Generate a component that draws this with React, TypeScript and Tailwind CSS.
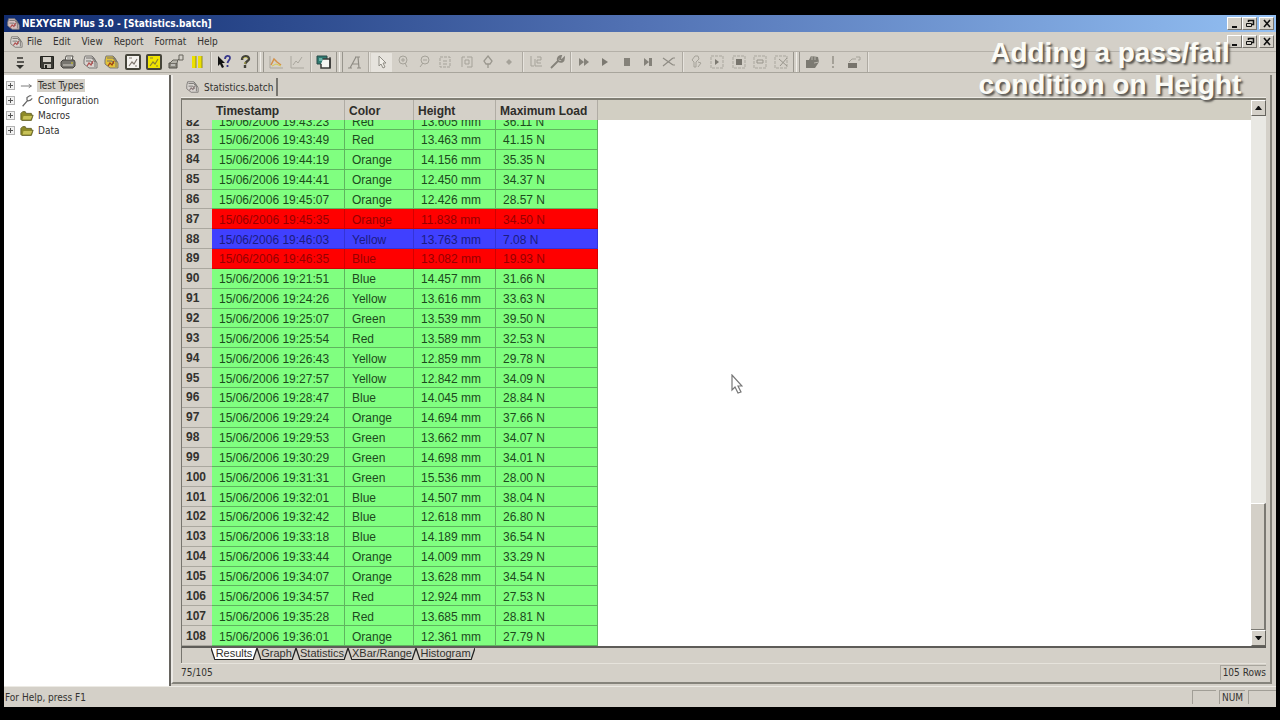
import type { ReactNode } from "react";
import clsx from "clsx";

type RowStatus = "pass" | "fail" | "selected";

interface ResultRow {
  id: number;
  timestamp: string;
  color: string;
  height: string;
  load: string;
  status?: RowStatus;
}

const ROWS: ResultRow[] = [
  { id: 83, timestamp: "15/06/2006 19:43:49", color: "Red", height: "13.463 mm", load: "41.15 N" },
  { id: 84, timestamp: "15/06/2006 19:44:19", color: "Orange", height: "14.156 mm", load: "35.35 N" },
  { id: 85, timestamp: "15/06/2006 19:44:41", color: "Orange", height: "12.450 mm", load: "34.37 N" },
  { id: 86, timestamp: "15/06/2006 19:45:07", color: "Orange", height: "12.426 mm", load: "28.57 N" },
  { id: 87, timestamp: "15/06/2006 19:45:35", color: "Orange", height: "11.838 mm", load: "34.50 N", status: "fail" },
  { id: 88, timestamp: "15/06/2006 19:46:03", color: "Yellow", height: "13.763 mm", load: "7.08 N", status: "selected" },
  { id: 89, timestamp: "15/06/2006 19:46:35", color: "Blue", height: "13.082 mm", load: "19.93 N", status: "fail" },
  { id: 90, timestamp: "15/06/2006 19:21:51", color: "Blue", height: "14.457 mm", load: "31.66 N" },
  { id: 91, timestamp: "15/06/2006 19:24:26", color: "Yellow", height: "13.616 mm", load: "33.63 N" },
  { id: 92, timestamp: "15/06/2006 19:25:07", color: "Green", height: "13.539 mm", load: "39.50 N" },
  { id: 93, timestamp: "15/06/2006 19:25:54", color: "Red", height: "13.589 mm", load: "32.53 N" },
  { id: 94, timestamp: "15/06/2006 19:26:43", color: "Yellow", height: "12.859 mm", load: "29.78 N" },
  { id: 95, timestamp: "15/06/2006 19:27:57", color: "Yellow", height: "12.842 mm", load: "34.09 N" },
  { id: 96, timestamp: "15/06/2006 19:28:47", color: "Blue", height: "14.045 mm", load: "28.84 N" },
  { id: 97, timestamp: "15/06/2006 19:29:24", color: "Orange", height: "14.694 mm", load: "37.66 N" },
  { id: 98, timestamp: "15/06/2006 19:29:53", color: "Green", height: "13.662 mm", load: "34.07 N" },
  { id: 99, timestamp: "15/06/2006 19:30:29", color: "Green", height: "14.698 mm", load: "34.01 N" },
  { id: 100, timestamp: "15/06/2006 19:31:31", color: "Green", height: "15.536 mm", load: "28.00 N" },
  { id: 101, timestamp: "15/06/2006 19:32:01", color: "Blue", height: "14.507 mm", load: "38.04 N" },
  { id: 102, timestamp: "15/06/2006 19:32:42", color: "Blue", height: "12.618 mm", load: "26.80 N" },
  { id: 103, timestamp: "15/06/2006 19:33:18", color: "Blue", height: "14.189 mm", load: "36.54 N" },
  { id: 104, timestamp: "15/06/2006 19:33:44", color: "Orange", height: "14.009 mm", load: "33.29 N" },
  { id: 105, timestamp: "15/06/2006 19:34:07", color: "Orange", height: "13.628 mm", load: "34.54 N" },
  { id: 106, timestamp: "15/06/2006 19:34:57", color: "Red", height: "12.924 mm", load: "27.53 N" },
  { id: 107, timestamp: "15/06/2006 19:35:28", color: "Red", height: "13.685 mm", load: "28.81 N" },
  { id: 108, timestamp: "15/06/2006 19:36:01", color: "Orange", height: "12.361 mm", load: "27.79 N" },
];

const STATUS_CLASSES: Record<RowStatus, string> = {
  pass: "bg-[#80ff80] text-[#1d4a1d] border-[#5fb45f]",
  fail: "bg-[#ff0000] text-[#960000] border-[#d40000]",
  selected: "bg-[#4040ff] text-[#1c1c80] border-[#3434d8]",
};

const GRAY = "#8f8c84";

function Icon({ children, size = 16 }: { children: ReactNode; size?: number }) {
  return (
    <svg width={size} height={size} viewBox="0 0 16 16" fill="none" aria-hidden="true">
      {children}
    </svg>
  );
}

// Stacked sheets with a red mark, used for the app and for batch documents
function BatchIcon({ size = 16, fill = "#d8d4d0", mark = "#b05050" }: { size?: number; fill?: string; mark?: string }) {
  return (
    <Icon size={size}>
      <path d="M2 6l1-4h7l2 2 3 5v5H7l-5-4z" fill={fill} stroke="#7a7876" />
      <path d="M4 4h6l3 4v5M4 7h5l2 3M10 2l4 6" stroke="#75726f" />
      <path d="M5 12l2-3 2 2 2-4" stroke={mark} strokeWidth="1.3" />
    </Icon>
  );
}

const saveIcon = (
  <Icon>
    <path d="M1.500 2.500h13v12h-12l-1-1z" fill="#3a3a34" stroke="#22221e" />
    <path d="M4 3h8v5H4z" fill="#d4d0c8" />
    <path d="M5 10h7v4H5z" fill="#b9b6ae" />
    <path d="M6 11h2v3H6z" fill="#22221e" />
  </Icon>
);

const printIcon = (
  <Icon>
    <path d="M5 7l1-5h7l-1 5" fill="#f4f2ec" stroke="#55534e" />
    <path d="M1 8l2-2h11l1 2v4l-2 2H3l-2-2z" fill="#77756f" stroke="#45433f" />
    <path d="M3 11h10" stroke="#d4d0c8" />
    <path d="M11 9h2" stroke="#d8d020" />
    <path d="M7 4h4" stroke="#77756f" />
  </Icon>
);

const goldBatchIcon = <BatchIcon fill="#e3c338" mark="#a04010" />;

function ChartBox({ fill, line }: { fill: string; line: string }) {
  return (
    <Icon>
      <rect x="1" y="1" width="14" height="14" rx="1" fill={fill} stroke="#45443a" strokeWidth="2" />
      <path d="M4 12l3-4 2 2 3-5M4 4h3M10 12h2" stroke={line} strokeWidth="1.200" />
    </Icon>
  );
}

const connectIcon = (
  <Icon>
    <path d="M1 9h8v5H1z" fill="#8c8a80" stroke="#55534c" />
    <path d="M2 9l3-3h5l-1 3" fill="#b5b3aa" stroke="#66645c" />
    <path d="M11 1h4v5h-4zM9 7l2-2" stroke="#66645c" />
    <path d="M3 11h4" stroke="#eee" />
  </Icon>
);

const pauseIcon = (
  <Icon>
    <path d="M3 2h4v12H3zM9 2h4v12H9z" fill="#ece000" />
    <path d="M7 2v12M13 2v12" stroke="#8f8a20" />
  </Icon>
);

const contextHelpIcon = (
  <Icon>
    <path d="M2 2v10l2-2 2 4 2-1-2-4h3z" fill="#111" />
    <path d="M9 5c0-4 5-4 5-1 0 2-2 2-2.500 5M11.500 11v2" stroke="#38388c" strokeWidth="1.800" />
  </Icon>
);

const aboutIcon = (
  <Icon>
    <path d="M5 6c0-5 7-5 7-1 0 2-3 2-4 5M8 11v3" stroke="#44433a" strokeWidth="2.400" />
    <path d="M6 5c1-2 4-2 5 0M8 8v2" stroke="#c8c24a" strokeWidth="1" />
  </Icon>
);

const graphIcon = (
  <Icon>
    <path d="M2 2v12h13" stroke="#aaa69c" />
    <path d="M3 11l3-6 3 3 4 3" stroke="#d49048" strokeWidth="1.500" />
    <path d="M4 12l4-2 5 2" stroke="#d8ca50" />
  </Icon>
);

const grayGraphIcon = (
  <Icon>
    <path d="M2 2v12h13M4 11l3-4 2 2 4-6" stroke="#aaa79e" />
  </Icon>
);

const windowIcon = (
  <Icon>
    <path d="M1 2h10v8H1z" fill="#2f7a70" stroke="#2a4a48" />
    <path d="M7 5h7v9H5v-4" fill="#f6f6f2" stroke="#3c3c38" strokeWidth="1.500" />
    <path d="M3 4h3v3H3z" fill="#6ab0a8" />
    <path d="M14 3v11" stroke="#222" />
  </Icon>
);

const italicIcon = (
  <Icon>
    <path d="M3 14L9 3h2l1 11M5 10h7M8 3h5M1 14h4M10 14h4" stroke={GRAY} strokeWidth="1.200" />
  </Icon>
);

const pointerIcon = (
  <Icon>
    <path d="M5 2v10l2-2 2 4 2-1-2-4h3z" fill="#f2f0ea" stroke={GRAY} />
  </Icon>
);

const zoomInIcon = (
  <Icon>
    <circle cx="8" cy="6" r="4" stroke="#a5a299" />
    <path d="M8 4v4M6 6h4M10 9l2 4" stroke="#a5a299" />
  </Icon>
);

const zoomOutIcon = (
  <Icon>
    <circle cx="9" cy="6" r="4" stroke="#a5a299" />
    <path d="M7 6h4M7 9l-3 4" stroke="#a5a299" />
  </Icon>
);

const zoomBoxIcon = (
  <Icon>
    <rect x="3" y="3" width="10" height="10" stroke="#a5a299" strokeDasharray="3 1" />
    <path d="M6 7h4M6 10h4" stroke="#a5a299" />
  </Icon>
);

const fitIcon = (
  <Icon>
    <path d="M3 13V3h3M8 3h5v10H8M6 6h4v4H6z" stroke="#a5a299" />
  </Icon>
);

const markerIcon = (
  <Icon>
    <path d="M8 2l4 5-2 3H6L4 7zM8 10v4" stroke="#9a978e" strokeWidth="1.300" />
  </Icon>
);

const dotIcon = (
  <Icon>
    <path d="M8 5l3 3-3 3-3-3z" fill="#a5a299" />
  </Icon>
);

const scaleIcon = (
  <Icon>
    <path d="M3 2v10h3M7 5v7h7M9 3h4v3H9v3h4" stroke="#a5a299" />
  </Icon>
);

const wrenchIcon = (
  <Icon>
    <path d="M2 14l7-7M9 7c-1-3 1-5 3-5l-1 3 2 1 2-2c0 3-2 5-6 3" stroke="#85827a" strokeWidth="1.800" />
  </Icon>
);

const fastForwardIcon = (
  <Icon>
    <path d="M3 4l5 4-5 4zM8 4l5 4-5 4z" fill="#85827a" />
  </Icon>
);

const playIcon = (
  <Icon>
    <path d="M5 4l6 4-6 4z" fill="#7c7971" />
  </Icon>
);

const stopIcon = (
  <Icon>
    <path d="M5 4h6v8H5z" fill="#85827a" />
  </Icon>
);

const skipIcon = (
  <Icon>
    <path d="M4 4l5 4-5 4zM9 4h3v8H9z" fill="#85827a" />
  </Icon>
);

const cutIcon = (
  <Icon>
    <path d="M2 4l10 7M2 12l10-8M12 4h2M12 11h2" stroke={GRAY} strokeWidth="1.200" />
  </Icon>
);

const handIcon = (
  <Icon>
    <path d="M6 13V8L4 6l3-4h3l1 3-3 3v5zM10 8l3 1-3 4" stroke="#a5a299" />
  </Icon>
);

function BoxedIcon({ children }: { children: ReactNode }) {
  return (
    <Icon>
      <rect x="2" y="2" width="12" height="12" stroke="#aaa79e" strokeDasharray="3 1" />
      {children}
    </Icon>
  );
}

const machineIcon = (
  <Icon>
    <path d="M2 6h3l2-4 7 1 1 5-4 6H2z" fill="#7c7a72" />
    <path d="M8 2v4M11 3v3M15 8l-5 1" stroke="#b8b5ac" />
  </Icon>
);

const alertIcon = (
  <Icon>
    <path d="M8 2v8M8 12v2" stroke="#98958c" strokeWidth="1.600" />
  </Icon>
);

const deviceIcon = (
  <Icon>
    <path d="M2 9h9v5H2z" fill="#77746c" />
    <path d="M3 8l3-3h4M10 3h4v3h-2" stroke="#a5a299" />
  </Icon>
);

function ToolButton({ label, pressed, children }: { label: string; pressed?: boolean; children: ReactNode }) {
  return (
    <button
      type="button"
      aria-label={label}
      className={clsx("flex h-[19px] min-w-0 flex-1 items-center justify-center", pressed && "bg-[#e6e3dd]")}
    >
      {children}
    </button>
  );
}

function Separator() {
  return (
    <div className="flex h-full w-[5px] justify-center">
      <div className="w-px bg-[#aeaaa2]" />
      <div className="w-px bg-[#e6e3dd]" />
    </div>
  );
}

// Gap between two docked bars
function BarBreak() {
  return (
    <div className="flex h-full w-[9px] justify-between px-px">
      <div className="w-px bg-[#98958d]" />
      <div className="w-px bg-[#f0eee9]" />
      <div className="w-px bg-[#98958d]" />
    </div>
  );
}

function Toolbar() {
  return (
    <div className="flex h-[22px] items-center border-y border-t-[#b4b0a8] border-b-[#a8a59c]">
      <div className="flex w-[32px] items-center">
        <ToolButton label="More buttons">
          <Icon>
            <path d="M5 4h6M5 8h7" stroke="#33322e" strokeWidth="1.500" />
            <path d="M4 11h8l-4 4z" fill="#33322e" />
          </Icon>
        </ToolButton>
      </div>
      <div className="flex w-[172px]">
        <ToolButton label="Save">{saveIcon}</ToolButton>
        <ToolButton label="Print">{printIcon}</ToolButton>
        <ToolButton label="New batch"><BatchIcon /></ToolButton>
        <ToolButton label="Open batch">{goldBatchIcon}</ToolButton>
        <ToolButton label="Test chart"><ChartBox fill="#f4f2ee" line="#807870" /></ToolButton>
        <ToolButton label="Run chart"><ChartBox fill="#f0e400" line="#8a8230" /></ToolButton>
        <ToolButton label="Connect">{connectIcon}</ToolButton>
        <ToolButton label="Pause">{pauseIcon}</ToolButton>
      </div>
      <Separator />
      <div className="flex w-[43px]">
        <ToolButton label="Context help">{contextHelpIcon}</ToolButton>
        <ToolButton label="About">{aboutIcon}</ToolButton>
      </div>
      <BarBreak />
      <div className="flex w-[43px]">
        <ToolButton label="Graph">{graphIcon}</ToolButton>
        <ToolButton label="Graph options">{grayGraphIcon}</ToolButton>
      </div>
      <Separator />
      <div className="flex w-[22px]">
        <ToolButton label="Windows">{windowIcon}</ToolButton>
      </div>
      <BarBreak />
      <div className="flex w-[22px]">
        <ToolButton label="Annotate">{italicIcon}</ToolButton>
      </div>
      <Separator />
      <div className="flex w-[149px]">
        <ToolButton label="Select" pressed>{pointerIcon}</ToolButton>
        <ToolButton label="Zoom in">{zoomInIcon}</ToolButton>
        <ToolButton label="Zoom out">{zoomOutIcon}</ToolButton>
        <ToolButton label="Zoom area">{zoomBoxIcon}</ToolButton>
        <ToolButton label="Fit">{fitIcon}</ToolButton>
        <ToolButton label="Marker">{markerIcon}</ToolButton>
        <ToolButton label="Point">{dotIcon}</ToolButton>
      </div>
      <Separator />
      <div className="flex w-[43px]">
        <ToolButton label="Scale">{scaleIcon}</ToolButton>
        <ToolButton label="Settings">{wrenchIcon}</ToolButton>
      </div>
      <Separator />
      <div className="flex w-[107px]">
        <ToolButton label="Fast forward">{fastForwardIcon}</ToolButton>
        <ToolButton label="Play">{playIcon}</ToolButton>
        <ToolButton label="Stop">{stopIcon}</ToolButton>
        <ToolButton label="Skip">{skipIcon}</ToolButton>
        <ToolButton label="Cut">{cutIcon}</ToolButton>
      </div>
      <Separator />
      <div className="flex w-[107px]">
        <ToolButton label="Pan">{handIcon}</ToolButton>
        <ToolButton label="Boxed play"><BoxedIcon><path d="M6 5l4 3-4 3z" fill="#7c7971" /></BoxedIcon></ToolButton>
        <ToolButton label="Boxed stop"><BoxedIcon><path d="M5 5h6v6H5z" fill="#77746c" /></BoxedIcon></ToolButton>
        <ToolButton label="Boxed list"><BoxedIcon><path d="M5 6h6v3H5z" stroke="#98958c" /></BoxedIcon></ToolButton>
        <ToolButton label="Boxed cut"><BoxedIcon><path d="M6 5l8 7M7 12l7-8" stroke="#98958c" /></BoxedIcon></ToolButton>
      </div>
      <BarBreak />
      <div className="flex w-[64px]">
        <ToolButton label="Machine">{machineIcon}</ToolButton>
        <ToolButton label="Alert">{alertIcon}</ToolButton>
        <ToolButton label="Device">{deviceIcon}</ToolButton>
      </div>
      <Separator />
    </div>
  );
}

function CaptionButtons() {
  const button =
    "flex h-[13px] w-[15px] items-center justify-center border border-t-white border-l-white border-r-[#77746e] border-b-[#77746e] bg-[#d4d0c8]";

  return (
    <div className="flex pr-[2px]">
      <button type="button" aria-label="Minimize" className={button}>
        <svg width="10" height="9" viewBox="0 0 10 9"><path d="M2 7h5v2H2z" fill="#111" /></svg>
      </button>
      <button type="button" aria-label="Restore" className={button}>
        <svg width="10" height="9" viewBox="0 0 10 9" fill="none" stroke="#111">
          <path d="M3.500 3V1.500h5v4H7" strokeWidth="1.500" />
          <path d="M1.500 4.500h5v3h-5z" />
        </svg>
      </button>
      <button type="button" aria-label="Close" className={clsx(button, "ml-[2px]")}>
        <svg width="10" height="9" viewBox="0 0 10 9" stroke="#111" strokeWidth="1.600"><path d="M2 1l6 7M8 1L2 8" /></svg>
      </button>
    </div>
  );
}

const folderIcon = (
  <Icon size={14}>
    <path d="M1 5l2-2h3l1 2h6v2h2l-2 6H2l-1-1z" fill="#8e8a28" stroke="#5e5c24" />
    <path d="M4 8h10l-2 4H3z" fill="#c8c258" />
  </Icon>
);

const TREE_ITEMS = [
  {
    label: "Test Types",
    selected: true,
    icon: <Icon size={14}><path d="M1 8h12M10 6l3 2-3 2" stroke="#6a6a6a" /></Icon>,
  },
  {
    label: "Configuration",
    icon: <Icon size={14}><path d="M3 14l6-7M8 7V4l3-2h2M9 8l3-1 2-2" stroke="#666" strokeWidth="1.400" /></Icon>,
  },
  { label: "Macros", icon: folderIcon },
  { label: "Data", icon: folderIcon },
];

function TreePane() {
  return (
    <ul className="w-[165px] shrink-0 bg-white pt-[3px]" role="tree">
      {TREE_ITEMS.map((item) => (
        <li key={item.label} role="treeitem" className="flex h-[15px] items-center pl-[2px]">
          <button type="button" aria-label={`Expand ${item.label}`} className="mr-[5px]">
            <svg width="9" height="9" viewBox="0 0 9 9" fill="none">
              <rect x="0.500" y="0.500" width="8" height="8" fill="#f2f2f2" stroke="#b4b4b4" />
              <path d="M2 4.500h5M4.500 2v5" stroke="#555" />
            </svg>
          </button>
          {item.icon}
          <span className={clsx("ml-[3px] px-px leading-[13px]", item.selected && "bg-[#d4d0c8]")}>{item.label}</span>
        </li>
      ))}
    </ul>
  );
}

// Row scrolled halfway under the header: only its lower part shows
function ClippedText({ children }: { children: ReactNode }) {
  return (
    <div className="flex h-[9px] items-end overflow-hidden leading-[14px]">
      <span>{children}</span>
    </div>
  );
}

function ResultsTable() {
  const headCell = "h-[20px] border-r border-[#b0aca4] p-0 pt-px pl-[4px] text-left font-bold";
  const numberCell = "border-b border-[#aaa79f] bg-[#d4d0c8] p-0 pl-[4px] text-left font-bold text-[#33322f]";

  return (
    <table className="h-full w-[416px] table-fixed border-separate border-spacing-0 font-['Liberation_Sans',sans-serif] text-[12px] leading-[14px]">
      <colgroup>
        <col className="w-[30px]" />
        <col className="w-[133px]" />
        <col className="w-[69px]" />
        <col className="w-[82px]" />
        <col className="w-[102px]" />
      </colgroup>
      <thead>
        <tr className="bg-[#d4d0c8] text-[#2e2d2a]">
          <td className="h-[20px] p-0" />
          <th className={headCell}>Timestamp</th>
          <th className={headCell}>Color</th>
          <th className={headCell}>Height</th>
          <th className={headCell}>Maximum Load</th>
        </tr>
      </thead>
      <tbody>
        <tr className="h-[10px]">
          <th className={numberCell}><ClippedText>82</ClippedText></th>
          {["15/06/2006 19:43:23", "Red", "13.605 mm", "36.11 N"].map((value) => (
            <td key={value} className={clsx("border-r border-b p-0 pl-[7px]", STATUS_CLASSES.pass)}>
              <ClippedText>{value}</ClippedText>
            </td>
          ))}
        </tr>
        {ROWS.map((row) => {
          const cell = clsx("border-r border-b p-0 pt-[2px] pl-[7px]", STATUS_CLASSES[row.status ?? "pass"]);
          return (
            <tr key={row.id}>
              <th className={numberCell}>{row.id}</th>
              <td className={cell}>{row.timestamp}</td>
              <td className={cell}>{row.color}</td>
              <td className={cell}>{row.height}</td>
              <td className={cell}>{row.load}</td>
            </tr>
          );
        })}
      </tbody>
    </table>
  );
}

function ScrollBar() {
  const arrow =
    "flex h-[16px] w-full shrink-0 items-center justify-center border border-t-white border-l-white border-r-[#66645e] border-b-[#66645e] bg-[#d4d0c8]";

  return (
    <div className="flex w-[15px] shrink-0 flex-col bg-[#e9e8e3]">
      <button type="button" aria-label="Scroll up" className={arrow}>
        <svg width="7" height="4" viewBox="0 0 7 4"><path d="M0 4l3-4h1l3 4z" fill="#111" /></svg>
      </button>
      <div className="flex-1" />
      <div className="h-[127px] border-t border-r-2 border-b border-t-white border-r-[#7b7973] border-b-[#7b7973] bg-[#d4d0c8]" />
      <button type="button" aria-label="Scroll down" className={arrow}>
        <svg width="7" height="4" viewBox="0 0 7 4"><path d="M0 0h7L4 4H3z" fill="#111" /></svg>
      </button>
    </div>
  );
}

const SHEETS = [
  { label: "Results", width: "w-[46px]", active: true },
  { label: "Graph", width: "w-[39px]" },
  { label: "Statistics", width: "w-[52px]" },
  { label: "XBar/Range", width: "w-[68px]" },
  { label: "Histogram", width: "w-[59px]" },
];

function SheetTabs() {
  return (
    <div className="flex h-[15px] items-start border-l border-[#77756f] pl-[29px] font-['Liberation_Sans',sans-serif] text-[11px] leading-[11px]">
      {SHEETS.map((sheet) => (
        <button key={sheet.label} type="button" className={clsx("flex h-[12px]", sheet.width)}>
          <svg width="4" height="12" viewBox="0 0 4 12" className="shrink-0">
            <path d="M0 0h4v12z" fill={sheet.active ? "#fff" : "#d4d0c8"} />
            <path d="M0 0l4 12" stroke="#222" strokeWidth="1.300" />
          </svg>
          <span
            className={clsx(
              "flex h-full min-w-0 flex-1 justify-center border-b border-[#222] whitespace-nowrap",
              sheet.active ? "bg-white" : "bg-[#d4d0c8]"
            )}
          >
            {sheet.label}
          </span>
          <svg width="4" height="12" viewBox="0 0 4 12" className="shrink-0">
            <path d="M0 0h4L0 12z" fill={sheet.active ? "#fff" : "none"} />
            <path d="M4 0L0 12" stroke="#222" strokeWidth="1.300" />
          </svg>
        </button>
      ))}
    </div>
  );
}

function DocumentPane() {
  return (
    <section className="mr-[4px] mb-[2px] flex min-w-0 flex-1 flex-col border-r-2 border-b-2 border-l-2 border-r-[#85837b] border-b-[#85837b] border-l-[#eceae6] pr-[4px] pl-[8px]">
      <div className="flex h-[23px] items-start border-b border-[#eceae4] pt-[3px]">
        <button type="button" className="flex h-[18px] items-center gap-[5px] border-r-2 border-[#77756f] pr-[3px] pl-[4px]">
          <BatchIcon size={14} mark="#8a7a7a" />
          Statistics.batch
        </button>
      </div>
      <div className="flex min-h-0 flex-1 border-t-2 border-b-2 border-l border-t-[#807e74] border-b-[#5e5c58] border-l-[#77756f]">
        <ResultsTable />
        <div className="min-w-0 flex-1 bg-white">
          <div className="h-[20px] bg-[#d2cfc3]" />
        </div>
        <ScrollBar />
      </div>
      <SheetTabs />
      <div className="flex h-[19px] items-center justify-between border-t border-[#e6e3dc] pb-[2px]">
        <span>75/105</span>
        <span className="h-[15px] border-t border-l border-[#a8a59d] pl-[2px] leading-[14px]">105 Rows</span>
      </div>
    </section>
  );
}

function MousePointer() {
  return (
    <svg width="12" height="20" viewBox="0 0 12 20" className="pointer-events-none absolute top-[374px] left-[731px]" aria-hidden="true">
      <path d="M1 1v15l3-3 3 6 3-1-3-6h4z" fill="#fff" stroke="#777" strokeWidth="1.200" />
    </svg>
  );
}

export default function App() {
  return (
    <div className="relative flex h-screen flex-col overflow-hidden bg-black px-1 pt-[15px] pb-[13px] font-['DejaVu_Sans_Condensed','DejaVu_Sans',sans-serif] text-[10px] text-[#33322f]">
      <header className="flex h-[17px] shrink-0 items-center bg-linear-to-r from-[#112c70] via-[#5272b4] to-[#93bff2] pl-[2px]">
        <BatchIcon size={14} fill="#d8c0c0" />
        <h1 className="ml-[2px] flex-1 font-bold text-white">NEXYGEN Plus 3.0 - [Statistics.batch]</h1>
        <CaptionButtons />
      </header>

      <div className="flex flex-1 flex-col bg-[#d4d0c8]">
        <nav className="flex h-[19px] shrink-0 items-center pl-[5px]">
          <BatchIcon size={14} />
          <div className="flex flex-1 gap-[11px] pl-[4px]">
            {["File", "Edit", "View", "Report", "Format", "Help"].map((item) => (
              <button key={item} type="button">{item}</button>
            ))}
          </div>
          <CaptionButtons />
        </nav>
        <Toolbar />
        <main className="flex min-h-0 flex-1 pt-[2px]">
          <TreePane />
          <div className="w-[2px] shrink-0 bg-[#66645f]" />
          <DocumentPane />
        </main>
        <footer className="flex h-[21px] shrink-0 items-center gap-[3px] border-t border-[#eceae4] pl-px">
          <span className="flex-1">For Help, press F1</span>
          <span className="h-[14px] w-[24px] border-t border-l border-[#a19e96]" />
          <span className="h-[14px] w-[26px] border-t border-l border-[#a19e96] text-center leading-[13px]">NUM</span>
          <span className="h-[14px] w-[28px] border-t border-l border-[#a19e96]" />
        </footer>
      </div>

      <MousePointer />
      <p className="pointer-events-none absolute top-[37px] right-0 w-[340px] text-center font-['Liberation_Sans',sans-serif] text-[28px] leading-[32px] font-bold text-[#fbfbf6] [text-shadow:2px_2px_2px_#55534e]">
        Adding a pass/fail
        <br />
        condition on Height
      </p>
    </div>
  );
}
